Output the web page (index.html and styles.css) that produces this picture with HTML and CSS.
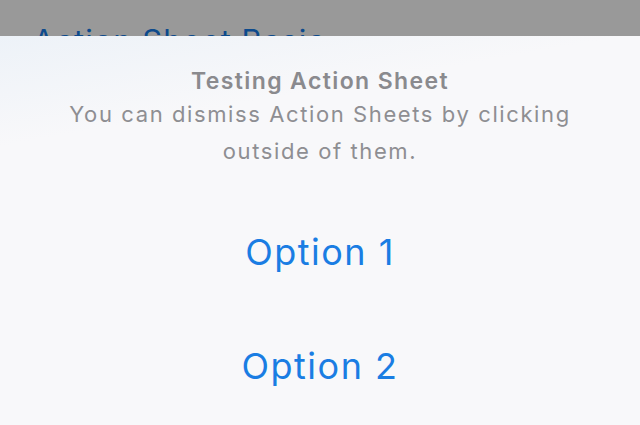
FILE: index.html
```html
<!DOCTYPE html>
<html lang="en">
<head>
<meta charset="UTF-8">
<title>Action Sheet Basic</title>
<link rel="stylesheet" href="styles.css">
</head>
<body>
<div class="page-title">Action Sheet Basic</div>
<div class="sheet">
  <div class="sheet-head">
    <div class="sheet-title">Testing Action Sheet</div>
    <div class="sheet-msg">You can dismiss Action Sheets by clicking<br>outside of them.</div>
  </div>
  <button class="sheet-btn">Option 1</button>
  <button class="sheet-btn">Option 2</button>
</div>
</body>
</html>
```

FILE: styles.css
```css
body { margin: 0; background: #999999; font-family: Inter, "Liberation Sans", sans-serif; height: 425px; overflow: hidden; }
.page-title { height: 36px; padding-left: 33px; color: #0d4a8c; font-size: 31px; line-height: 82px; letter-spacing: 1px; overflow: hidden; }
.sheet { background: #f8f8fa; background-image: linear-gradient(170deg, #edf2f8 0%, #f8f8fa 22%); text-align: center; min-height: 389px; }
.sheet-head { padding: 30px 10px 25px; }
.sheet-title { color: #8a8a8e; font-size: 23px; font-weight: 600; line-height: 30px; letter-spacing: 1.4px; }
.sheet-msg { color: #8e8e92; font-size: 22px; line-height: 37px; letter-spacing: 1.6px; }
.sheet-btn { display: block; width: 100%; height: 114px; border: 0; background: none; color: #1a7de3; font-family: inherit; font-size: 36px; letter-spacing: 1.5px; }
```
